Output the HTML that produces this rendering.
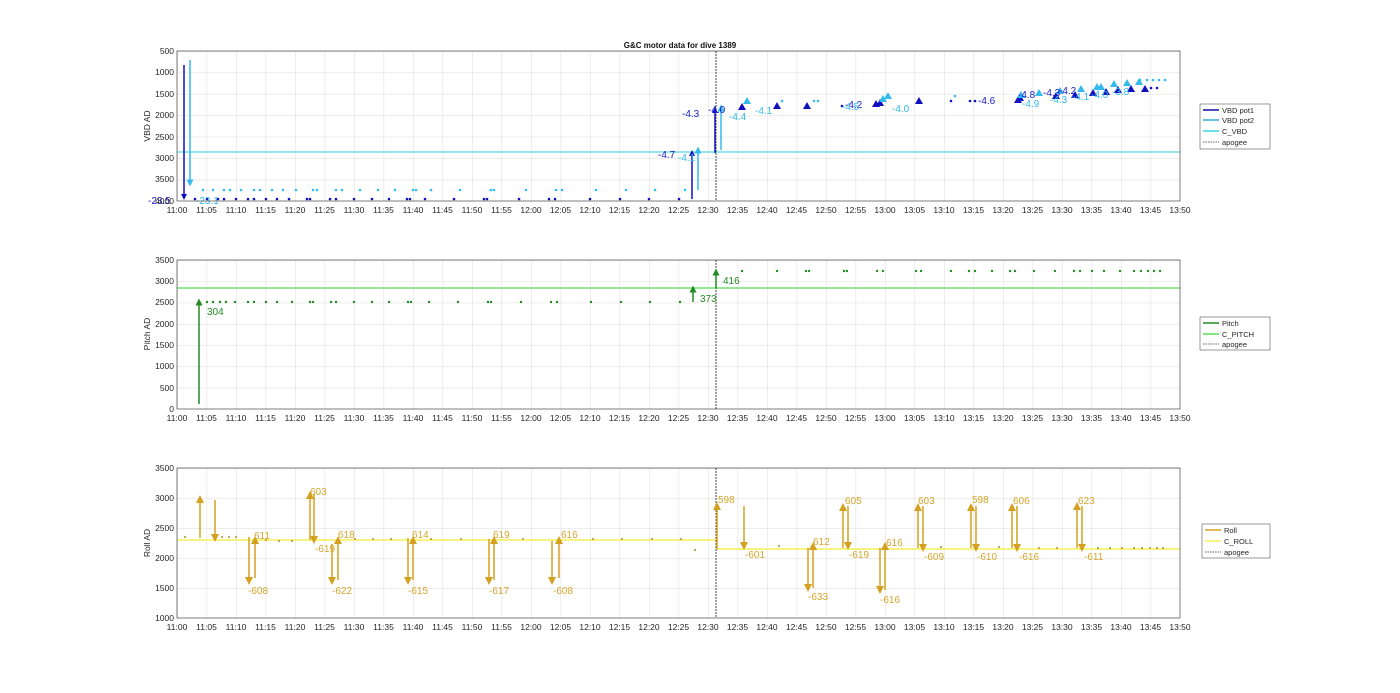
<!DOCTYPE html>
<html><head><meta charset="utf-8"><style>
html,body{margin:0;padding:0;background:#fff;}
svg{display:block;font-family:"Liberation Sans",sans-serif;}
.t{font-size:8.5px;fill:#262626;text-anchor:middle}
.y{font-size:8.5px;fill:#262626;text-anchor:end}
.nv{font-size:10px;fill:#1a1acc}
.cy{font-size:10px;fill:#33bbee}
.gr{font-size:10px;fill:#228b22}
.rl{font-size:10px;fill:#d4a62a}
.lg{font-size:7.5px;fill:#262626}
.yl{font-size:8.5px;fill:#262626;text-anchor:middle}
</style></head><body>
<svg width="1400" height="693" viewBox="0 0 1400 693" xmlns="http://www.w3.org/2000/svg">
<defs>
<pattern id="vg" x="177" y="0" width="29.5" height="10" patternUnits="userSpaceOnUse"><line x1="0.25" y1="0" x2="0.25" y2="10" stroke="#e3e3e3" stroke-width="0.8"/></pattern>
<pattern id="h1" x="0" y="51" width="10" height="21.43" patternUnits="userSpaceOnUse"><line x1="0" y1="0.25" x2="10" y2="0.25" stroke="#e3e3e3" stroke-width="0.8"/></pattern>
<pattern id="h2" x="0" y="260" width="10" height="21.29" patternUnits="userSpaceOnUse"><line x1="0" y1="0.25" x2="10" y2="0.25" stroke="#e3e3e3" stroke-width="0.8"/></pattern>
<pattern id="h3" x="0" y="468" width="10" height="30" patternUnits="userSpaceOnUse"><line x1="0" y1="0.25" x2="10" y2="0.25" stroke="#e3e3e3" stroke-width="0.8"/></pattern>
<marker id="mn" markerWidth="6" markerHeight="6" refX="3" refY="3" orient="auto" markerUnits="userSpaceOnUse" viewBox="0 0 6 6"><path d="M0,0L6,3L0,6z" fill="#1010c0"/></marker>
<marker id="mc" markerWidth="7" markerHeight="7" refX="3.5" refY="3.5" orient="auto" markerUnits="userSpaceOnUse" viewBox="0 0 7 7"><path d="M0,0L7,3.5L0,7z" fill="#33bbee"/></marker>
<marker id="mg" markerWidth="7" markerHeight="7" refX="3.5" refY="3.5" orient="auto" markerUnits="userSpaceOnUse" viewBox="0 0 7 7"><path d="M0,0L7,3.5L0,7z" fill="#228b22"/></marker>
<marker id="mr" markerWidth="8" markerHeight="8" refX="4" refY="4" orient="auto" markerUnits="userSpaceOnUse" viewBox="0 0 8 8"><path d="M0,0L8,4L0,8z" fill="#d4a020"/></marker>
</defs>

<!-- TOP -->
<rect x="177" y="51" width="1003" height="150" fill="url(#vg)"/>
<rect x="177" y="51" width="1003" height="150" fill="url(#h1)"/>
<text x="680" y="48" style="font-size:8px;font-weight:bold;fill:#111;text-anchor:middle">G&amp;C motor data for dive 1389</text>
<line x1="177" y1="152" x2="1180" y2="152" stroke="#6fe0e6" stroke-width="1.6"/>
<line x1="716" y1="51" x2="716" y2="201" stroke="#444" stroke-width="1" stroke-dasharray="2,1"/>
<g stroke-width="1.5">
<line x1="184" y1="65" x2="184" y2="197" stroke="#1010c0" marker-end="url(#mn)"/>
<line x1="190" y1="60" x2="190" y2="183" stroke="#33bbee" marker-end="url(#mc)"/>
<line x1="692" y1="199" x2="692" y2="153" stroke="#1010c0" marker-end="url(#mn)"/>
<line x1="698" y1="190" x2="698" y2="150" stroke="#33bbee" marker-end="url(#mc)"/>
<line x1="715" y1="153" x2="715" y2="110" stroke="#1010c0" marker-end="url(#mn)"/>
<line x1="721" y1="150" x2="721" y2="108" stroke="#33bbee" marker-end="url(#mc)"/>
</g>
<g fill="#1010c0">
<circle cx="195" cy="199" r="1.3"/><circle cx="207" cy="199" r="1.3"/><circle cx="218" cy="199" r="1.3"/><circle cx="224" cy="199" r="1.3"/><circle cx="236" cy="199" r="1.3"/><circle cx="248" cy="199" r="1.3"/><circle cx="254" cy="199" r="1.3"/><circle cx="266" cy="199" r="1.3"/><circle cx="277" cy="199" r="1.3"/><circle cx="289" cy="199" r="1.3"/><circle cx="307" cy="199" r="1.3"/><circle cx="310" cy="199" r="1.3"/><circle cx="330" cy="199" r="1.3"/><circle cx="336" cy="199" r="1.3"/><circle cx="354" cy="199" r="1.3"/><circle cx="372" cy="199" r="1.3"/><circle cx="389" cy="199" r="1.3"/><circle cx="407" cy="199" r="1.3"/><circle cx="410" cy="199" r="1.3"/><circle cx="425" cy="199" r="1.3"/><circle cx="454" cy="199" r="1.3"/><circle cx="484" cy="199" r="1.3"/><circle cx="487" cy="199" r="1.3"/><circle cx="519" cy="199" r="1.3"/><circle cx="549" cy="199" r="1.3"/><circle cx="555" cy="199" r="1.3"/><circle cx="590" cy="199" r="1.3"/><circle cx="620" cy="199" r="1.3"/><circle cx="649" cy="199" r="1.3"/><circle cx="679" cy="199" r="1.3"/>
<circle cx="842" cy="106" r="1.3"/><circle cx="951" cy="101" r="1.3"/><circle cx="970" cy="101" r="1.3"/><circle cx="975" cy="101" r="1.3"/><circle cx="1145" cy="88" r="1.3"/><circle cx="1151" cy="88" r="1.3"/><circle cx="1157" cy="88" r="1.3"/>
</g>
<g fill="#33bbee">
<circle cx="203" cy="190" r="1.3"/><circle cx="213" cy="190" r="1.3"/><circle cx="224" cy="190" r="1.3"/><circle cx="230" cy="190" r="1.3"/><circle cx="241" cy="190" r="1.3"/><circle cx="254" cy="190" r="1.3"/><circle cx="260" cy="190" r="1.3"/><circle cx="272" cy="190" r="1.3"/><circle cx="283" cy="190" r="1.3"/><circle cx="296" cy="190" r="1.3"/><circle cx="313" cy="190" r="1.3"/><circle cx="317" cy="190" r="1.3"/><circle cx="336" cy="190" r="1.3"/><circle cx="342" cy="190" r="1.3"/><circle cx="360" cy="190" r="1.3"/><circle cx="378" cy="190" r="1.3"/><circle cx="395" cy="190" r="1.3"/><circle cx="413" cy="190" r="1.3"/><circle cx="416" cy="190" r="1.3"/><circle cx="431" cy="190" r="1.3"/><circle cx="460" cy="190" r="1.3"/><circle cx="491" cy="190" r="1.3"/><circle cx="494" cy="190" r="1.3"/><circle cx="526" cy="190" r="1.3"/><circle cx="556" cy="190" r="1.3"/><circle cx="562" cy="190" r="1.3"/><circle cx="596" cy="190" r="1.3"/><circle cx="626" cy="190" r="1.3"/><circle cx="655" cy="190" r="1.3"/><circle cx="685" cy="190" r="1.3"/>
<circle cx="1140" cy="80" r="1.3"/><circle cx="1147" cy="80" r="1.3"/><circle cx="1153" cy="80" r="1.3"/><circle cx="1159" cy="80" r="1.3"/><circle cx="1165" cy="80" r="1.3"/><circle cx="782" cy="101" r="1.3"/><circle cx="814" cy="101" r="1.3"/><circle cx="818" cy="101" r="1.3"/><circle cx="955" cy="96" r="1.3"/>
</g>
<g fill="#1010c0">
<path d="M742,103l-4,7h8z"/><path d="M777,102l-4,7h8z"/><path d="M807,102l-4,7h8z"/><path d="M876,100l-4,7h8z"/><path d="M880,99l-4,7h8z"/><path d="M919,97l-4,7h8z"/><path d="M1018,96l-4,7h8z"/><path d="M1020,94l-4,7h8z"/><path d="M1056,92l-4,7h8z"/><path d="M1075,91l-4,7h8z"/><path d="M1093,89l-4,7h8z"/><path d="M1106,88l-4,7h8z"/><path d="M1118,86l-4,7h8z"/><path d="M1131,85l-4,7h8z"/><path d="M1145,85l-4,7h8z"/>
</g>
<g fill="#33bbee">
<path d="M747,97l-4,7h8z"/><path d="M883,95l-4,7h8z"/><path d="M888,92l-4,7h8z"/><path d="M1021,91l-4,7h8z"/><path d="M1039,89l-4,7h8z"/><path d="M1060,87l-4,7h8z"/><path d="M1081,85l-4,7h8z"/><path d="M1097,83l-4,7h8z"/><path d="M1101,83l-4,7h8z"/><path d="M1114,80l-4,7h8z"/><path d="M1127,79l-4,7h8z"/><path d="M1139,78l-4,7h8z"/>
</g>
<text class="nv" x="148" y="204">-23.5</text><text class="cy" x="196" y="204">-23.1</text>
<text class="nv" x="658" y="158">-4.7</text><text class="cy" x="678" y="161">-4.1</text>
<text class="nv" x="682" y="117">-4.3</text><text class="nv" x="708" y="113">-4.0</text><text class="cy" x="729" y="120">-4.4</text>
<text class="cy" x="755" y="114">-4.1</text><text class="nv" x="845" y="108">-4.2</text><text class="cy" x="842" y="110">-4.5</text>
<text class="cy" x="892" y="112">-4.0</text><text class="nv" x="978" y="104">-4.6</text><text class="nv" x="1018" y="98">-4.8</text>
<text class="cy" x="1022" y="107">-4.9</text><text class="nv" x="1043" y="96">-4.3</text><text class="cy" x="1050" y="103">-4.3</text>
<text class="nv" x="1059" y="94">-4.2</text><text class="cy" x="1072" y="100">-4.1</text><text class="cy" x="1091" y="98">-4.0</text><text class="cy" x="1112" y="95">-3.8</text>
<rect x="177" y="51" width="1003" height="150" fill="none" stroke="#262626" stroke-width="0.6"/>
<text class="y" x="174" y="54">500</text><text class="y" x="174" y="75">1000</text><text class="y" x="174" y="97">1500</text><text class="y" x="174" y="118">2000</text><text class="y" x="174" y="140">2500</text><text class="y" x="174" y="161">3000</text><text class="y" x="174" y="182">3500</text><text class="y" x="174" y="204">4000</text>
<text class="yl" x="150" y="126" transform="rotate(-90 150 126)">VBD AD</text>
<g class="t"><text x="177" y="213">11:00</text><text x="206.5" y="213">11:05</text><text x="236" y="213">11:10</text><text x="265.5" y="213">11:15</text><text x="295" y="213">11:20</text><text x="324.5" y="213">11:25</text><text x="354" y="213">11:30</text><text x="383.5" y="213">11:35</text><text x="413" y="213">11:40</text><text x="442.5" y="213">11:45</text><text x="472" y="213">11:50</text><text x="501.5" y="213">11:55</text><text x="531" y="213">12:00</text><text x="560.5" y="213">12:05</text><text x="590" y="213">12:10</text><text x="619.5" y="213">12:15</text><text x="649" y="213">12:20</text><text x="678.5" y="213">12:25</text><text x="708" y="213">12:30</text><text x="737.5" y="213">12:35</text><text x="767" y="213">12:40</text><text x="796.5" y="213">12:45</text><text x="826" y="213">12:50</text><text x="855.5" y="213">12:55</text><text x="885" y="213">13:00</text><text x="914.5" y="213">13:05</text><text x="944" y="213">13:10</text><text x="973.5" y="213">13:15</text><text x="1003" y="213">13:20</text><text x="1032.5" y="213">13:25</text><text x="1062" y="213">13:30</text><text x="1091.5" y="213">13:35</text><text x="1121" y="213">13:40</text><text x="1150.5" y="213">13:45</text><text x="1180" y="213">13:50</text></g>
<rect x="1200" y="104" width="70" height="45" fill="#fff" stroke="#333" stroke-width="0.5"/>
<line x1="1203" y1="110" x2="1219" y2="110" stroke="#1010a0" stroke-width="1.5"/><text class="lg" x="1222" y="113">VBD pot1</text>
<line x1="1203" y1="120" x2="1219" y2="120" stroke="#33aadd" stroke-width="1.5"/><text class="lg" x="1222" y="123">VBD pot2</text>
<line x1="1203" y1="131" x2="1219" y2="131" stroke="#33d8e6" stroke-width="1.5"/><text class="lg" x="1222" y="134">C_VBD</text>
<line x1="1203" y1="142" x2="1219" y2="142" stroke="#333" stroke-width="0.8" stroke-dasharray="1.5,1"/><text class="lg" x="1222" y="145">apogee</text>

<!-- PITCH -->
<rect x="177" y="260" width="1003" height="149" fill="url(#vg)"/>
<rect x="177" y="260" width="1003" height="149" fill="url(#h2)"/>
<line x1="177" y1="288" x2="1180" y2="288" stroke="#55dd55" stroke-width="1.3"/>
<line x1="716" y1="260" x2="716" y2="409" stroke="#444" stroke-width="1" stroke-dasharray="2,1"/>
<g stroke="#228b22" stroke-width="1.5">
<line x1="199" y1="404" x2="199" y2="302" marker-end="url(#mg)"/>
<line x1="693" y1="302" x2="693" y2="289" marker-end="url(#mg)"/>
<line x1="716" y1="288" x2="716" y2="272" marker-end="url(#mg)"/>
</g>
<g fill="#228b22">
<circle cx="207" cy="302" r="1.2"/><circle cx="213" cy="302" r="1.2"/><circle cx="220" cy="302" r="1.2"/><circle cx="226" cy="302" r="1.2"/><circle cx="235" cy="302" r="1.2"/><circle cx="248" cy="302" r="1.2"/><circle cx="254" cy="302" r="1.2"/><circle cx="266" cy="302" r="1.2"/><circle cx="277" cy="302" r="1.2"/><circle cx="292" cy="302" r="1.2"/><circle cx="310" cy="302" r="1.2"/><circle cx="313" cy="302" r="1.2"/><circle cx="331" cy="302" r="1.2"/><circle cx="336" cy="302" r="1.2"/><circle cx="354" cy="302" r="1.2"/><circle cx="372" cy="302" r="1.2"/><circle cx="389" cy="302" r="1.2"/><circle cx="408" cy="302" r="1.2"/><circle cx="411" cy="302" r="1.2"/><circle cx="429" cy="302" r="1.2"/><circle cx="458" cy="302" r="1.2"/><circle cx="488" cy="302" r="1.2"/><circle cx="491" cy="302" r="1.2"/><circle cx="521" cy="302" r="1.2"/><circle cx="551" cy="302" r="1.2"/><circle cx="557" cy="302" r="1.2"/><circle cx="591" cy="302" r="1.2"/><circle cx="621" cy="302" r="1.2"/><circle cx="650" cy="302" r="1.2"/><circle cx="680" cy="302" r="1.2"/>
<circle cx="742" cy="271" r="1.2"/><circle cx="777" cy="271" r="1.2"/><circle cx="806" cy="271" r="1.2"/><circle cx="809" cy="271" r="1.2"/><circle cx="844" cy="271" r="1.2"/><circle cx="847" cy="271" r="1.2"/><circle cx="877" cy="271" r="1.2"/><circle cx="883" cy="271" r="1.2"/><circle cx="916" cy="271" r="1.2"/><circle cx="921" cy="271" r="1.2"/><circle cx="951" cy="271" r="1.2"/><circle cx="969" cy="271" r="1.2"/><circle cx="975" cy="271" r="1.2"/><circle cx="992" cy="271" r="1.2"/><circle cx="1010" cy="271" r="1.2"/><circle cx="1015" cy="271" r="1.2"/><circle cx="1034" cy="271" r="1.2"/><circle cx="1055" cy="271" r="1.2"/><circle cx="1074" cy="271" r="1.2"/><circle cx="1080" cy="271" r="1.2"/><circle cx="1092" cy="271" r="1.2"/><circle cx="1104" cy="271" r="1.2"/><circle cx="1120" cy="271" r="1.2"/><circle cx="1134" cy="271" r="1.2"/><circle cx="1141" cy="271" r="1.2"/><circle cx="1148" cy="271" r="1.2"/><circle cx="1154" cy="271" r="1.2"/><circle cx="1160" cy="271" r="1.2"/>
</g>
<text class="gr" x="207" y="315">304</text><text class="gr" x="700" y="302">373</text><text class="gr" x="723" y="284">416</text>
<rect x="177" y="260" width="1003" height="149" fill="none" stroke="#262626" stroke-width="0.6"/>
<text class="y" x="174" y="263">3500</text><text class="y" x="174" y="284">3000</text><text class="y" x="174" y="305">2500</text><text class="y" x="174" y="327">2000</text><text class="y" x="174" y="348">1500</text><text class="y" x="174" y="369">1000</text><text class="y" x="174" y="391">500</text><text class="y" x="174" y="412">0</text>
<text class="yl" x="150" y="334" transform="rotate(-90 150 334)">Pitch AD</text>
<g class="t"><text x="177" y="421">11:00</text><text x="206.5" y="421">11:05</text><text x="236" y="421">11:10</text><text x="265.5" y="421">11:15</text><text x="295" y="421">11:20</text><text x="324.5" y="421">11:25</text><text x="354" y="421">11:30</text><text x="383.5" y="421">11:35</text><text x="413" y="421">11:40</text><text x="442.5" y="421">11:45</text><text x="472" y="421">11:50</text><text x="501.5" y="421">11:55</text><text x="531" y="421">12:00</text><text x="560.5" y="421">12:05</text><text x="590" y="421">12:10</text><text x="619.5" y="421">12:15</text><text x="649" y="421">12:20</text><text x="678.5" y="421">12:25</text><text x="708" y="421">12:30</text><text x="737.5" y="421">12:35</text><text x="767" y="421">12:40</text><text x="796.5" y="421">12:45</text><text x="826" y="421">12:50</text><text x="855.5" y="421">12:55</text><text x="885" y="421">13:00</text><text x="914.5" y="421">13:05</text><text x="944" y="421">13:10</text><text x="973.5" y="421">13:15</text><text x="1003" y="421">13:20</text><text x="1032.5" y="421">13:25</text><text x="1062" y="421">13:30</text><text x="1091.5" y="421">13:35</text><text x="1121" y="421">13:40</text><text x="1150.5" y="421">13:45</text><text x="1180" y="421">13:50</text></g>
<rect x="1200" y="317" width="70" height="33" fill="#fff" stroke="#333" stroke-width="0.5"/>
<line x1="1203" y1="323" x2="1219" y2="323" stroke="#228b22" stroke-width="1.5"/><text class="lg" x="1222" y="326">Pitch</text>
<line x1="1203" y1="334" x2="1219" y2="334" stroke="#55dd55" stroke-width="1.5"/><text class="lg" x="1222" y="337">C_PITCH</text>
<line x1="1203" y1="344" x2="1219" y2="344" stroke="#333" stroke-width="0.8" stroke-dasharray="1.5,1"/><text class="lg" x="1222" y="347">apogee</text>

<!-- ROLL -->
<rect x="177" y="468" width="1003" height="150" fill="url(#vg)"/>
<rect x="177" y="468" width="1003" height="150" fill="url(#h3)"/>
<line x1="177" y1="540" x2="716" y2="540" stroke="#f5ee55" stroke-width="1.6"/>
<line x1="716" y1="549" x2="1180" y2="549" stroke="#f5ee55" stroke-width="1.6"/>
<line x1="716" y1="468" x2="716" y2="618" stroke="#444" stroke-width="1" stroke-dasharray="2,1"/>
<g stroke="#d4a020" stroke-width="1.5">
<line x1="200" y1="538" x2="200" y2="499" marker-end="url(#mr)"/>
<line x1="215" y1="500" x2="215" y2="538" marker-end="url(#mr)"/>
<line x1="249" y1="537" x2="249" y2="581" marker-end="url(#mr)"/><line x1="255" y1="578" x2="255" y2="540" marker-end="url(#mr)"/>
<line x1="310" y1="540" x2="310" y2="495" marker-end="url(#mr)"/><line x1="314" y1="494" x2="314" y2="540" marker-end="url(#mr)"/>
<line x1="332" y1="544" x2="332" y2="581" marker-end="url(#mr)"/><line x1="338" y1="580" x2="338" y2="540" marker-end="url(#mr)"/>
<line x1="408" y1="538" x2="408" y2="581" marker-end="url(#mr)"/><line x1="413" y1="580" x2="413" y2="540" marker-end="url(#mr)"/>
<line x1="489" y1="539" x2="489" y2="581" marker-end="url(#mr)"/><line x1="494" y1="580" x2="494" y2="540" marker-end="url(#mr)"/>
<line x1="552" y1="541" x2="552" y2="581" marker-end="url(#mr)"/><line x1="559" y1="578" x2="559" y2="540" marker-end="url(#mr)"/>
<line x1="717" y1="549" x2="717" y2="506" marker-end="url(#mr)"/>
<line x1="744" y1="506" x2="744" y2="546" marker-end="url(#mr)"/>
<line x1="808" y1="548" x2="808" y2="588" marker-end="url(#mr)"/><line x1="813" y1="588" x2="813" y2="546" marker-end="url(#mr)"/>
<line x1="843" y1="548" x2="843" y2="507" marker-end="url(#mr)"/><line x1="848" y1="506" x2="848" y2="546" marker-end="url(#mr)"/>
<line x1="880" y1="548" x2="880" y2="590" marker-end="url(#mr)"/><line x1="885" y1="590" x2="885" y2="546" marker-end="url(#mr)"/>
<line x1="918" y1="548" x2="918" y2="507" marker-end="url(#mr)"/><line x1="923" y1="506" x2="923" y2="548" marker-end="url(#mr)"/>
<line x1="971" y1="548" x2="971" y2="507" marker-end="url(#mr)"/><line x1="976" y1="506" x2="976" y2="548" marker-end="url(#mr)"/>
<line x1="1012" y1="548" x2="1012" y2="507" marker-end="url(#mr)"/><line x1="1017" y1="506" x2="1017" y2="548" marker-end="url(#mr)"/>
<line x1="1077" y1="548" x2="1077" y2="506" marker-end="url(#mr)"/><line x1="1082" y1="506" x2="1082" y2="548" marker-end="url(#mr)"/>
</g>
<g fill="#b8a04a">
<circle cx="185" cy="537" r="1.1"/><circle cx="222" cy="537" r="1.1"/><circle cx="229" cy="537" r="1.1"/><circle cx="236" cy="537" r="1.1"/><circle cx="266" cy="540" r="1.1"/><circle cx="279" cy="541" r="1.1"/><circle cx="292" cy="541" r="1.1"/><circle cx="355" cy="539" r="1.1"/><circle cx="373" cy="539" r="1.1"/><circle cx="391" cy="539" r="1.1"/><circle cx="431" cy="539" r="1.1"/><circle cx="461" cy="539" r="1.1"/><circle cx="523" cy="539" r="1.1"/><circle cx="593" cy="539" r="1.1"/><circle cx="622" cy="539" r="1.1"/><circle cx="652" cy="539" r="1.1"/><circle cx="681" cy="539" r="1.1"/><circle cx="695" cy="550" r="1.1"/>
<circle cx="779" cy="546" r="1.1"/><circle cx="941" cy="547" r="1.1"/><circle cx="999" cy="547" r="1.1"/><circle cx="1039" cy="548" r="1.1"/><circle cx="1057" cy="548" r="1.1"/><circle cx="1098" cy="548" r="1.1"/><circle cx="1110" cy="548" r="1.1"/><circle cx="1122" cy="548" r="1.1"/><circle cx="1134" cy="548" r="1.1"/><circle cx="1142" cy="548" r="1.1"/><circle cx="1150" cy="548" r="1.1"/><circle cx="1157" cy="548" r="1.1"/><circle cx="1163" cy="548" r="1.1"/>
</g>
<g class="rl">
<text x="254" y="539">611</text><text x="248" y="594">-608</text><text x="310" y="495">603</text><text x="315" y="552">-619</text><text x="338" y="538">618</text><text x="332" y="594">-622</text>
<text x="412" y="538">614</text><text x="408" y="594">-615</text><text x="493" y="538">619</text><text x="489" y="594">-617</text><text x="561" y="538">616</text><text x="553" y="594">-608</text>
<text x="718" y="503">598</text><text x="745" y="558">-601</text><text x="813" y="545">612</text><text x="808" y="600">-633</text><text x="845" y="504">605</text><text x="849" y="558">-619</text>
<text x="886" y="546">616</text><text x="880" y="603">-616</text><text x="918" y="504">603</text><text x="924" y="560">-609</text><text x="972" y="503">598</text><text x="977" y="560">-610</text>
<text x="1013" y="504">606</text><text x="1019" y="560">-616</text><text x="1078" y="504">623</text><text x="1084" y="560">-611</text>
</g>
<rect x="177" y="468" width="1003" height="150" fill="none" stroke="#262626" stroke-width="0.6"/>
<text class="y" x="174" y="471">3500</text><text class="y" x="174" y="501">3000</text><text class="y" x="174" y="531">2500</text><text class="y" x="174" y="561">2000</text><text class="y" x="174" y="591">1500</text><text class="y" x="174" y="621">1000</text>
<text class="yl" x="150" y="543" transform="rotate(-90 150 543)">Roll AD</text>
<g class="t"><text x="177" y="630">11:00</text><text x="206.5" y="630">11:05</text><text x="236" y="630">11:10</text><text x="265.5" y="630">11:15</text><text x="295" y="630">11:20</text><text x="324.5" y="630">11:25</text><text x="354" y="630">11:30</text><text x="383.5" y="630">11:35</text><text x="413" y="630">11:40</text><text x="442.5" y="630">11:45</text><text x="472" y="630">11:50</text><text x="501.5" y="630">11:55</text><text x="531" y="630">12:00</text><text x="560.5" y="630">12:05</text><text x="590" y="630">12:10</text><text x="619.5" y="630">12:15</text><text x="649" y="630">12:20</text><text x="678.5" y="630">12:25</text><text x="708" y="630">12:30</text><text x="737.5" y="630">12:35</text><text x="767" y="630">12:40</text><text x="796.5" y="630">12:45</text><text x="826" y="630">12:50</text><text x="855.5" y="630">12:55</text><text x="885" y="630">13:00</text><text x="914.5" y="630">13:05</text><text x="944" y="630">13:10</text><text x="973.5" y="630">13:15</text><text x="1003" y="630">13:20</text><text x="1032.5" y="630">13:25</text><text x="1062" y="630">13:30</text><text x="1091.5" y="630">13:35</text><text x="1121" y="630">13:40</text><text x="1150.5" y="630">13:45</text><text x="1180" y="630">13:50</text></g>
<rect x="1202" y="524" width="68" height="34" fill="#fff" stroke="#333" stroke-width="0.5"/>
<line x1="1205" y1="530" x2="1221" y2="530" stroke="#d4a020" stroke-width="1.5"/><text class="lg" x="1224" y="533">Roll</text>
<line x1="1205" y1="541" x2="1221" y2="541" stroke="#f5ee55" stroke-width="1.5"/><text class="lg" x="1224" y="544">C_ROLL</text>
<line x1="1205" y1="552" x2="1221" y2="552" stroke="#333" stroke-width="0.8" stroke-dasharray="1.5,1"/><text class="lg" x="1224" y="555">apogee</text>
</svg>
</body></html>
